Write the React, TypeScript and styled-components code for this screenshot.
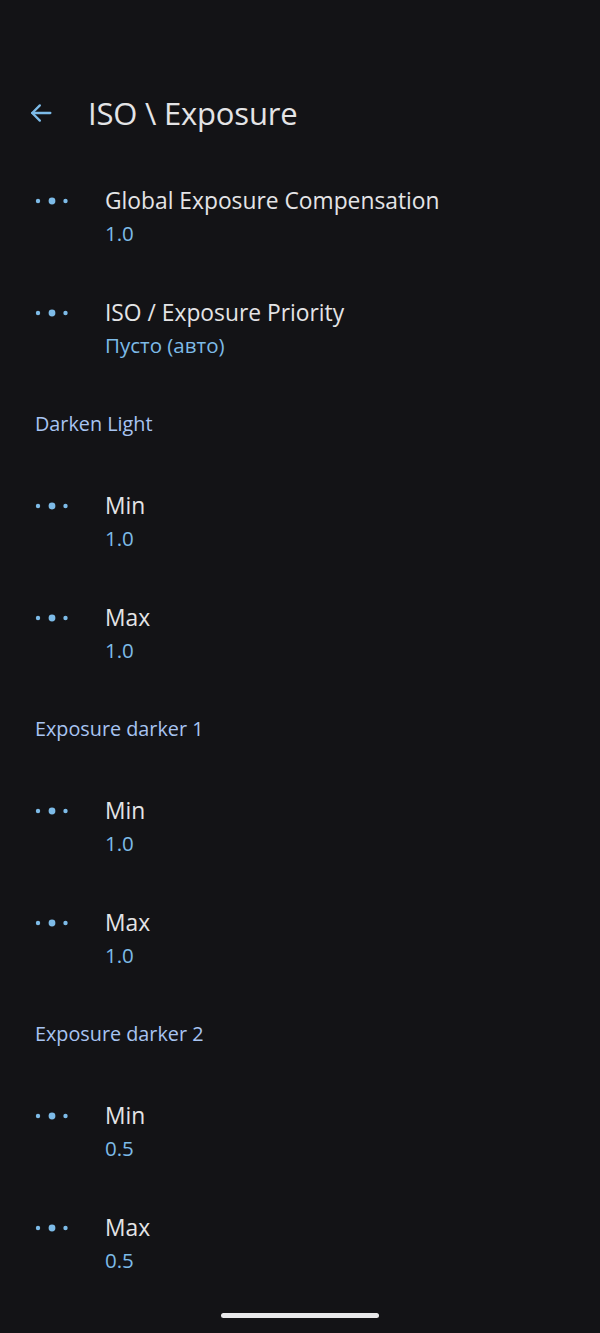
import React from "react";
import styled, { createGlobalStyle } from "styled-components";

const Global = createGlobalStyle`
  html, body { margin: 0; padding: 0; background: #131316; }
  body { font-family: "Open Sans", Roboto, sans-serif; -webkit-font-smoothing: antialiased; }
  * { box-sizing: border-box; }
`;

const Screen = styled.div`
  width: 600px;
  height: 1333px;
  background: #131316;
  display: flex;
  flex-direction: column;
  overflow: hidden;
`;

const AppBar = styled.div`
  margin-top: 81px;
  height: 64px;
  display: flex;
  align-items: center;
  padding-left: 26px;
`;

const BackButton = styled.div`
  width: 30px;
  height: 30px;
  display: flex;
  align-items: center;
  justify-content: center;
  margin-right: 32px;
`;

const Title = styled.h1`
  margin: 0;
  font-family: "Open Sans", sans-serif;
  font-weight: 400;
  font-size: 31px;
  color: #e4e4e6;
  letter-spacing: -0.2px;
`;

const List = styled.div`
  padding-top: 16px;
  display: flex;
  flex-direction: column;
`;

const Row = styled.div`
  display: flex;
  align-items: flex-start;
  padding: 24px 0 24px 35px;
`;

const IconBox = styled.div`
  width: 70px;
  height: 32px;
  display: flex;
  align-items: center;
`;

const Texts = styled.div`
  display: flex;
  flex-direction: column;
`;

const RowTitle = styled.div`
  font-size: 22.8px;
  line-height: 32px;
  color: #e4e4e6;
`;

const RowValue = styled.div`
  font-size: 20.5px;
  line-height: 32px;
  color: #7dbbe8;
`;

const SectionHeader = styled.div`
  padding: 24px 0 27px 35px;
  font-size: 19.8px;
  line-height: 30px;
  color: #a8c4f2;
`;

const HomeIndicator = styled.div`
  margin: 13px auto 0;
  width: 158px;
  height: 5px;
  border-radius: 3px;
  background: #e8e8ea;
`;

const Dots = () => (
  <svg width="36" height="10" viewBox="0 0 36 10">
    <circle cx="3" cy="5" r="2.2" fill="#7dbbe8" />
    <circle cx="17" cy="5" r="3.4" fill="#7dbbe8" />
    <circle cx="30.5" cy="5" r="2.2" fill="#7dbbe8" />
  </svg>
);

const BackArrow = () => (
  <svg width="28" height="28" viewBox="0 0 24 24" fill="none" stroke="#7dbbe8" strokeWidth="2" strokeLinecap="round" strokeLinejoin="round">
    <path d="M20 12H4.5" />
    <path d="M11 5.5L4.5 12l6.5 6.5" />
  </svg>
);

type Item = { kind: "row"; title: string; value: string } | { kind: "header"; title: string };

const items: Item[] = [
  { kind: "row", title: "Global Exposure Compensation", value: "1.0" },
  { kind: "row", title: "ISO / Exposure Priority", value: "Пусто (авто)" },
  { kind: "header", title: "Darken Light" },
  { kind: "row", title: "Min", value: "1.0" },
  { kind: "row", title: "Max", value: "1.0" },
  { kind: "header", title: "Exposure darker 1" },
  { kind: "row", title: "Min", value: "1.0" },
  { kind: "row", title: "Max", value: "1.0" },
  { kind: "header", title: "Exposure darker 2" },
  { kind: "row", title: "Min", value: "0.5" },
  { kind: "row", title: "Max", value: "0.5" },
];

export default function App() {
  return (
    <Screen>
      <Global />
      <AppBar>
        <BackButton>
          <BackArrow />
        </BackButton>
        <Title>ISO \ Exposure</Title>
      </AppBar>
      <List>
        {items.map((it, i) =>
          it.kind === "header" ? (
            <SectionHeader key={i}>{it.title}</SectionHeader>
          ) : (
            <Row key={i}>
              <IconBox>
                <Dots />
              </IconBox>
              <Texts>
                <RowTitle>{it.title}</RowTitle>
                <RowValue>{it.value}</RowValue>
              </Texts>
            </Row>
          )
        )}
      </List>
      <HomeIndicator />
    </Screen>
  );
}
